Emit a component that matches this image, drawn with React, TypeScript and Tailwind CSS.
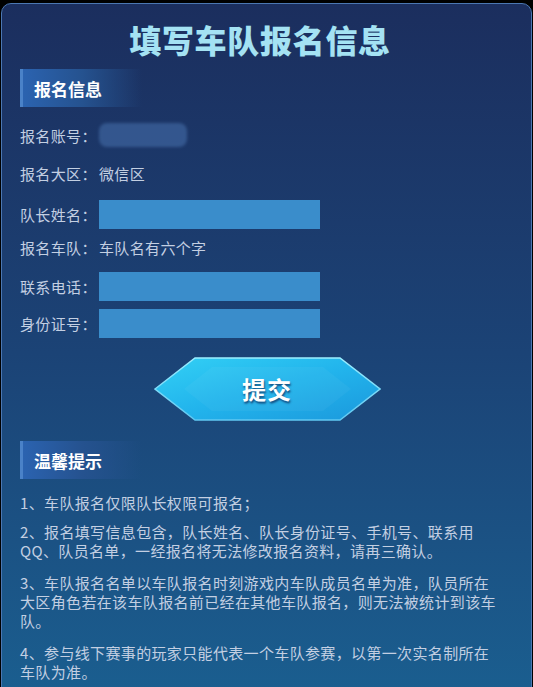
import React from "react";

const font = { fontFamily: '"Noto Sans CJK SC", "Noto Sans", sans-serif' };

function SectionHeader({ title }: { title: string }) {
  return (
    <div className="flex h-[38px] w-[122px] items-center border-l-[3px] border-[#4a82c8] bg-gradient-to-r from-[#2b63b0] via-[#25528f] to-transparent pl-[11px]">
      <span className="text-[17px] font-bold leading-none text-white">{title}</span>
    </div>
  );
}

function Row({ label, children, h, mt }: { label: string; children?: React.ReactNode; h: string; mt: string }) {
  return (
    <div className={`flex items-center ${h} ${mt}`}>
      <span className="w-[79px] shrink-0 whitespace-nowrap">{label}</span>
      {children}
    </div>
  );
}

export default function App() {
  return (
    <div className="h-[687px] w-[533px] overflow-hidden bg-black pt-[3px] pl-[1px] pr-[1px]" style={font}>
      <div className="h-[700px] rounded-t-[10px] border border-[#4b77b2] bg-gradient-to-b from-[#1b2e5e] via-[#1b4376] to-[#1a5f90] pl-[18px] pr-[32px]">
        <div className="flex h-[60px] items-center justify-center pl-[1px] pt-[9px]">
          <h1 className="text-[32px] font-black leading-none tracking-[0.7px] text-[#a4e2f3]">填写车队报名信息</h1>
        </div>
        <div className="mt-[5px]">
          <SectionHeader title="报名信息" />
        </div>
        <div className="text-[15px] leading-none tracking-[0.35px] text-[#c3cfe2]">
          <Row label="报名账号：" h="h-[26px]" mt="mt-[15px]">
            <div className="h-[24px] w-[88px] rounded-[8px] bg-[#3a5f98] opacity-80 blur-[1.5px]" />
          </Row>
          <Row label="报名大区：" h="h-[26px]" mt="mt-[12px]">
            <span>微信区</span>
          </Row>
          <Row label="队长姓名：" h="h-[29px]" mt="mt-[14px]">
            <div className="h-[29px] w-[221px] bg-[#3a8dcb]" />
          </Row>
          <Row label="报名车队：" h="h-[26px]" mt="mt-[5px]">
            <span>车队名有六个字</span>
          </Row>
          <Row label="联系电话：" h="h-[29px]" mt="mt-[12px]">
            <div className="h-[29px] w-[221px] bg-[#3a8dcb]" />
          </Row>
          <Row label="身份证号：" h="h-[29px]" mt="mt-[8px]">
            <div className="h-[29px] w-[221px] bg-[#3a8dcb]" />
          </Row>
        </div>
        <div className="mt-[19px] flex justify-center pl-[15px]">
          <button className="relative flex h-[64px] w-[227px] items-center justify-center">
            <svg className="absolute inset-0" width="227" height="64" viewBox="0 0 227 64">
              <defs>
                <linearGradient id="btnFill" x1="0" y1="0" x2="1" y2="1">
                  <stop offset="0" stopColor="#33d0f5" />
                  <stop offset="0.5" stopColor="#22b4ec" />
                  <stop offset="1" stopColor="#1b98dc" />
                </linearGradient>
                <linearGradient id="btnStroke" x1="0" y1="0" x2="0" y2="1">
                  <stop offset="0" stopColor="#9beeff" />
                  <stop offset="1" stopColor="#5fc8f2" />
                </linearGradient>
              </defs>
              <polygon points="1,32 41,1 186,1 226,32 186,63 41,63" fill="url(#btnFill)" stroke="url(#btnStroke)" strokeWidth="1.5" />
              <polygon points="30,32 58,10 169,10 197,32 169,54 58,54" fill="#ffffff" opacity="0.04" />
            </svg>
            <span className="relative text-[24px] font-bold leading-none tracking-[1px] text-white [text-shadow:1px_2px_2px_rgba(10,40,90,0.7)]">提交</span>
          </button>
        </div>
        <div className="mt-[20px]">
          <SectionHeader title="温馨提示" />
        </div>
        <div className="mt-[14px] text-[15px] leading-[19px] tracking-[0.35px] text-[#c3cfe2]">
          <p>1、车队报名仅限队长权限可报名；</p>
          <p className="mt-[10px]">2、报名填写信息包含，队长姓名、队长身份证号、手机号、联系用QQ、队员名单，一经报名将无法修改报名资料，请再三确认。</p>
          <p className="mt-[13px]">3、车队报名名单以车队报名时刻游戏内车队成员名单为准，队员所在大区角色若在该车队报名前已经在其他车队报名，则无法被统计到该车队。</p>
          <p className="mt-[13px]">4、参与线下赛事的玩家只能代表一个车队参赛，以第一次实名制所在车队为准。</p>
        </div>
      </div>
    </div>
  );
}
